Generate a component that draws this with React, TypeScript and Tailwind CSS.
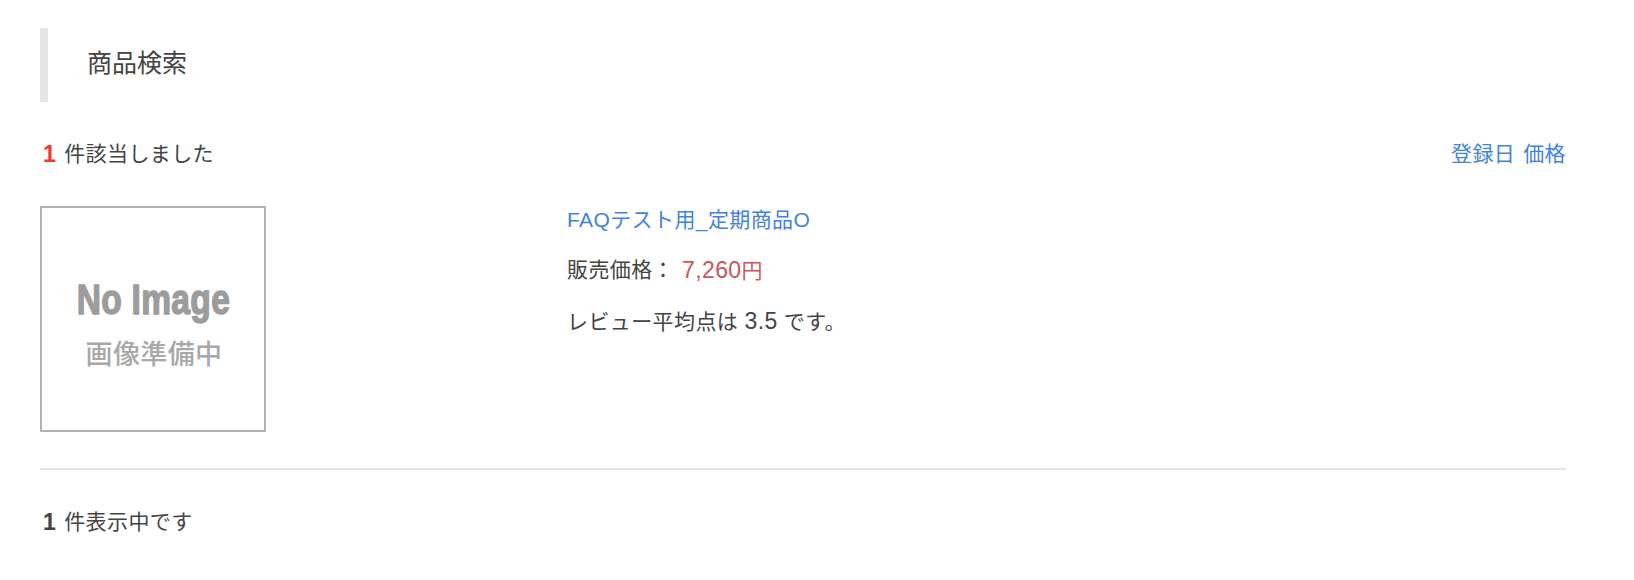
const FONT = "font-['Liberation_Sans','Noto_Sans_CJK_JP',sans-serif]";

const NoImage = () => (
    <div className="w-[226px] h-[226px] shrink-0 border-2 border-[#b2b2b2] flex flex-col items-center pt-[69px]">
        <p className="text-[43px] leading-[44px] font-bold text-[#9c9c9c] scale-x-[0.78] whitespace-nowrap [-webkit-text-stroke:1.5px_#9c9c9c]">
            No Image
        </p>
        <p className="mt-[16px] ml-[2px] text-[27px] leading-[36px] font-medium text-[#a8a8a8] whitespace-nowrap">
            画像準備中
        </p>
    </div>
);

export default function App() {
    return (
        <div className={`${FONT} w-[1634px] h-[580px] bg-white pl-[40px] pr-[68px] pt-[28px] text-[#444] tracking-[0.4px] overflow-hidden`}>
            {/* Heading */}
            <h1 className="h-[74px] border-l-[8px] border-[#e5e5e5] pl-[39px] pb-[3px] flex items-center text-[25px] tracking-normal">
                商品検索
            </h1>

            {/* Result count + sort links */}
            <div className="mt-[37px] h-[30px] flex items-center justify-between text-[21px]">
                <p className="flex items-center">
                    <span className="text-[23px] font-bold text-[#f03a2a] pl-[3px] mr-[8px]">1</span>
                    <span>件該当しました</span>
                </p>
                <p className="text-[#3f83e0] flex gap-[8px]">
                    <a>登録日</a>
                    <a>価格</a>
                </p>
            </div>

            {/* Product row */}
            <div className="mt-[37px] pb-[36px] border-b-2 border-[#e5e5e5] flex">
                <NoImage />
                <div className="ml-[301px] -mt-[1px] text-[21px] leading-[30px] flex flex-col gap-[20px]">
                    <a className="text-[#3f83e0]">FAQテスト用_定期商品O</a>
                    <p className="flex">
                        <span>販売価格：</span>
                        <span className="ml-[8px] text-[#c9565a]">
                            <span className="text-[23px]">7,260</span>円
                        </span>
                    </p>
                    <p>
                        レビュー平均点は <span className="text-[23px]">3.5</span> です。
                    </p>
                </div>
            </div>

            {/* Footer count */}
            <p className="mt-[37px] h-[30px] flex items-center text-[21px]">
                <span className="text-[23px] font-bold pl-[3px] mr-[8px]">1</span>
                <span>件表示中です</span>
            </p>
        </div>
    );
}
